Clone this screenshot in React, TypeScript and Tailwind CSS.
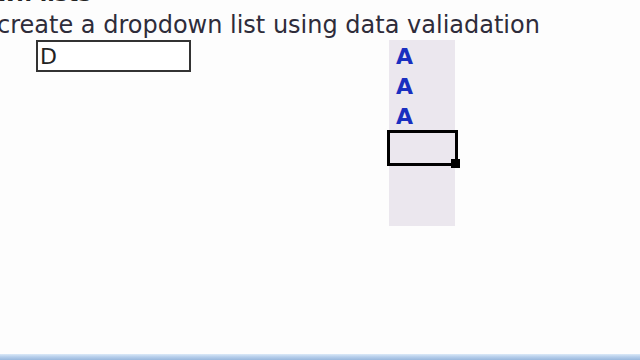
export default function App() {
  const rows = ['A', 'A', 'A']
  return (
    <div className="w-[640px] h-[360px] overflow-hidden bg-[#fdfdfd] flex flex-col" style={{ fontFamily: '"DejaVu Sans", Verdana, sans-serif' }}>
      <div className="flex-1 flex flex-col">
        <div className="h-[6px] overflow-hidden">
          <div className="-mt-[17px] -ml-[4px] text-[22px] font-bold text-[#222] leading-[22px] whitespace-nowrap">wn lists</div>
        </div>
        <div className="-ml-[3px] mt-[5px] text-[24px] leading-[28px] text-[#2e2c3a] whitespace-nowrap">
          create a dropdown list using data valiadation
        </div>
        <div className="flex items-start mt-[1px]">
          <div className="ml-[36px] w-[155px] h-[32px] border-2 border-[#333] bg-white flex items-center pl-[2px] text-[22px] text-[#222]">
            D
          </div>
          <div className="ml-[198px] w-[66px] h-[186px] bg-[#ebe7ee] flex flex-col">
            {rows.map((r, i) => (
              <div key={i} className="h-[30px] pl-[7px] pt-[5px] text-[22px] font-bold text-[#1a2fc0] leading-[24px]">
                {r}
              </div>
            ))}
            <div className="relative -ml-[2px] w-[71px] h-[36px] border-[3px] border-black">
              <div className="absolute -right-[5px] -bottom-[5px] w-[9px] h-[9px] bg-black" />
            </div>
          </div>
        </div>
      </div>
      <div className="h-[6px] bg-gradient-to-b from-[#dbe9f8] via-[#b4cdea] to-[#9ab8dd]" />
    </div>
  )
}
